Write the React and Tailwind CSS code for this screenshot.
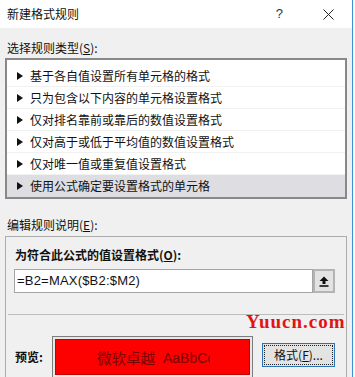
const rules = [
  '基于各自值设置所有单元格的格式',
  '只为包含以下内容的单元格设置格式',
  '仅对排名靠前或靠后的数值设置格式',
  '仅对高于或低于平均值的数值设置格式',
  '仅对唯一值或重复值设置格式',
  '使用公式确定要设置格式的单元格',
]

function Arrow() {
  return (
    <svg width="6" height="8" viewBox="0 0 6 8" className="shrink-0">
      <path d="M0 0 L6 4 L0 8 Z" fill="#111" />
    </svg>
  )
}

export default function App() {
  return (
    <div className="w-[355px] h-[377px] overflow-hidden bg-[#f7f7f7] flex font-['Noto_Sans_CJK_SC',sans-serif] text-[12px] text-[#111]">
      <div className="relative w-[353px] h-full border-r border-[#3f8fd2] bg-[#f0f0f0] flex flex-col">
        <div className="h-[28px] shrink-0 bg-white flex items-center pl-[7px]">
          <span className="leading-[16px]">新建格式规则</span>
          <span className="ml-auto mr-[40px] font-['Liberation_Sans',sans-serif] text-[13px] text-[#333]">?</span>
          <svg width="11" height="11" viewBox="0 0 11 11" className="mr-[18px]">
            <path d="M0.5 0.5 L10.5 10.5 M10.5 0.5 L0.5 10.5" stroke="#222" strokeWidth="1" />
          </svg>
        </div>

        <div className="mt-[12px] pl-[7px] h-[16px] leading-[16px]">
          选择规则类型(<span className="underline">S</span>):
        </div>

        <div className="mt-[2px] mx-[5px] h-[141px] border-2 border-[#888] bg-white pt-[5px] flex flex-col">
          {rules.map((r, i) => (
            <div
              key={r}
              className={
                'h-[22px] flex items-center gap-[7px] pl-[10px] ' +
                (i === 5 ? 'bg-[#dddde2]' : 'border-b border-[#f1f1f1]')
              }
            >
              <Arrow />
              <span className="leading-[16px]">{r}</span>
            </div>
          ))}
        </div>

        <div className="mt-[18px] pl-[7px] h-[16px] leading-[16px]">
          编辑规则说明(<span className="underline">E</span>):
        </div>

        <div className="mt-[3px] mx-[5px] flex-1 border border-[#adadad] border-b-0 flex flex-col">
          <div className="mt-[10px] pl-[9px] h-[16px] leading-[16px] font-bold">
            为符合此公式的值设置格式(<span className="underline">O</span>):
          </div>
          <div className="mt-[6px] ml-[8px] flex h-[24px]">
            <div className="w-[299px] bg-white border border-[#a5a5a5] flex items-center pl-[2px] font-['Liberation_Sans',sans-serif] text-[13px] tracking-[0.2px]">
              =B2=MAX($B2:$M2)
            </div>
            <div className="w-[22px] bg-[#e3e3e3] border-2 border-[#b4b4b4] flex items-center justify-center">
              <svg width="10" height="11" viewBox="0 0 10 11">
                <path d="M5 0.5 L9.5 5 L6.5 5 L6.5 8 L3.5 8 L3.5 5 L0.5 5 Z" fill="#111" />
                <rect x="0.5" y="9.2" width="9" height="1.6" fill="#111" />
              </svg>
            </div>
          </div>
          <div className="mt-[21px] mx-[2px] h-px bg-[#bcbcbc]" />
          <div className="mt-[21px] flex items-start">
            <div className="w-[46px] pl-[9px] pt-[13px] h-[16px] leading-[16px] font-bold">预览:</div>
            <div className="w-[201px] h-[42px] border border-[#7d7d7d] p-[2px] bg-[#e8e8e8]">
              <div className="h-full bg-[#fd0000] border border-[#c40000] flex items-center justify-center pt-[2px]">
                <div className="ml-[2px] w-[113px] h-[24px] overflow-hidden whitespace-nowrap text-[#7a0505] flex items-center gap-[8px]">
                  <span className="text-[14.5px] leading-[20px]">微软卓越</span>
                  <span className="font-['Liberation_Sans',sans-serif] text-[14px] leading-[20px]">AaBbCc</span>
                </div>
              </div>
            </div>
            <div className="ml-[9px] mt-[7px] w-[73px] h-[24px] border border-[#2a73b8] bg-[#e3e3e3] p-[1px]">
              <div className="h-full border border-dotted border-[#222] flex items-center justify-center leading-[16px]">
                格式(<span className="underline">F</span>)...
              </div>
            </div>
          </div>
        </div>

        <div className="absolute left-[246px] top-[312px] font-['Liberation_Serif',serif] font-bold text-[19px] leading-[20px] tracking-[1px] text-[#e01414]">
          Yuucn.com
        </div>
      </div>
    </div>
  )
}
